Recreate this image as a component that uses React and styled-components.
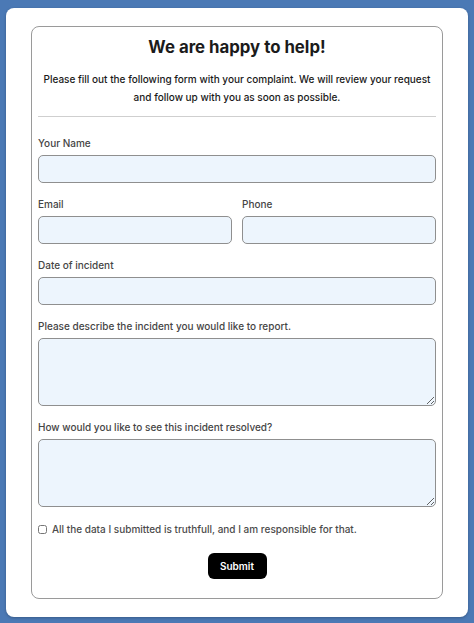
import styled, { createGlobalStyle } from "styled-components"

const GlobalStyle = createGlobalStyle`
	html, body {
		margin: 0;
		padding: 0;
		background: #4b79b5;
		font-family: Inter, "Liberation Sans", sans-serif;
	}
	#root {
		padding: 8px 6px 7px 6px;
	}
`

export default function App() {
	return (
		<>
			<GlobalStyle />
			<Panel>
				<Card>
					<Title>We are happy to help!</Title>
					<Intro>
						Please fill out the following form with your complaint. We will review your
						request and follow up with you as soon as possible.
					</Intro>
					<Divider />
					<Fields>
						<Field>
							<Label>Your Name</Label>
							<Input type="text" />
						</Field>
						<Row>
							<Field>
								<Label>Email</Label>
								<Input type="email" />
							</Field>
							<Field>
								<Label>Phone</Label>
								<Input type="tel" />
							</Field>
						</Row>
						<Field>
							<Label>Date of incident</Label>
							<Input type="text" />
						</Field>
						<Field>
							<Label>Please describe the incident you would like to report.</Label>
							<TextArea />
						</Field>
						<Field>
							<Label>How would you like to see this incident resolved?</Label>
							<TextArea />
						</Field>
						<CheckRow>
							<Check type="checkbox" />
							All the data I submitted is truthfull, and I am responsible for that.
						</CheckRow>
					</Fields>
					<Actions>
						<SubmitButton type="button">Submit</SubmitButton>
					</Actions>
				</Card>
			</Panel>
		</>
	)
}

const Panel = styled.div`
	background: #fff;
	border-radius: 8px;
	padding: 18px 25px 18px 25px;
	box-shadow: 0 1px 3px rgba(0, 0, 0, 0.25);
`

const Card = styled.div`
	border: 1px solid #9a9a9a;
	border-radius: 8px;
	padding: 8px 6px 19px 6px;
`

const Title = styled.h1`
	margin: 0;
	text-align: center;
	font-size: 16.8px;
	line-height: 24px;
	font-weight: 700;
	color: #1b1b1b;
`

const Intro = styled.p`
	margin: 11px 4px 0 4px;
	text-align: center;
	font-size: 10px;
	line-height: 18px;
	font-weight: 500;
	color: #1a1a1a;
`

const Divider = styled.hr`
	border: none;
	border-top: 1px solid #cfcfcf;
	margin: 10px 0 18px 0;
`

const Fields = styled.div`
	display: flex;
	flex-direction: column;
	gap: 13px;
`

const Row = styled.div`
	display: grid;
	grid-template-columns: 1fr 1fr;
	gap: 10px;
`

const Field = styled.div`
	display: flex;
	flex-direction: column;
	gap: 4px;
`

const Label = styled.label`
	font-size: 10px;
	line-height: 16px;
	font-weight: 500;
	color: #454545;
`

const Input = styled.input`
	box-sizing: border-box;
	height: 28px;
	width: 100%;
	margin: 0;
	border: 1px solid #8f8f8f;
	border-radius: 5px;
	background: #edf5fd;
	outline: none;
`

const TextArea = styled.textarea`
	box-sizing: border-box;
	height: 68px;
	width: 100%;
	margin: 0;
	border: 1px solid #8f8f8f;
	border-radius: 5px;
	background: #edf5fd;
	outline: none;
	resize: vertical;
	display: block;
`

const CheckRow = styled.label`
	display: flex;
	align-items: center;
	gap: 5px;
	font-size: 10px;
	line-height: 16px;
	font-weight: 500;
	color: #4b4b4b;
	margin-top: 1px;
`

const Check = styled.input`
	width: 9px;
	height: 9px;
	margin: 0;
`

const Actions = styled.div`
	display: flex;
	justify-content: center;
	margin-top: 16px;
`

const SubmitButton = styled.button`
	background: #000;
	color: #fff;
	border: none;
	border-radius: 6px;
	width: 59px;
	height: 26px;
	font-family: Inter, "Liberation Sans", sans-serif;
	font-size: 10px;
	font-weight: 600;
	cursor: pointer;
`
